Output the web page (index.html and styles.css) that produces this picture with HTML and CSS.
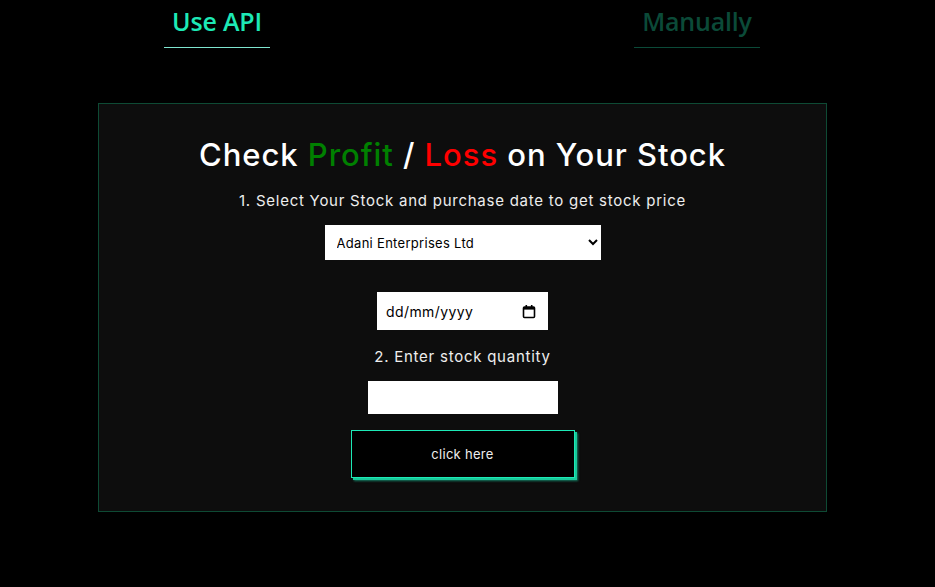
FILE: index.html
```html
<!DOCTYPE html>
<html lang="en">
<head>
<meta charset="utf-8">
<title>Profit / Loss</title>
<link rel="stylesheet" href="styles.css">
</head>
<body>
<nav class="tabs">
  <div class="tab-cell tab-cell-left"><a class="tab tab-active">Use API</a></div>
  <div class="tab-cell tab-cell-right"><a class="tab tab-inactive">Manually</a></div>
</nav>
<main class="card">
  <h1 class="title">Check <span class="profit">Profit</span> / <span class="loss">Loss</span> on Your Stock</h1>
  <p class="label">1. Select Your Stock and purchase date to get stock price</p>
  <select class="stock-select">
    <option>Adani Enterprises Ltd</option>
  </select>
  <label class="date-box">
    <input class="date-text" type="text" placeholder="dd/mm/yyyy">
    <svg class="cal-icon" width="14" height="15" viewBox="0 0 14 15" aria-hidden="true">
      <rect x="1.5" y="3" width="11" height="10.5" rx="1" fill="none" stroke="#000" stroke-width="1.6"/>
      <rect x="1.5" y="3" width="11" height="2.6" fill="#000"/>
      <rect x="3.5" y="1" width="1.6" height="2.5" fill="#000"/>
      <rect x="8.9" y="1" width="1.6" height="2.5" fill="#000"/>
    </svg>
  </label>
  <p class="label label-qty">2. Enter stock quantity</p>
  <input class="qty-input" type="number">
  <button class="btn">click here</button>
</main>
</body>
</html>
```
FILE: styles.css
```css
html, body {
  margin: 0;
  padding: 0;
  background: #000;
}
body {
  font-family: "Open Sans", "Noto Sans", sans-serif;
  color: #eee;
  min-height: 587px;
}
.tabs {
  display: flex;
  padding-top: 3px;
  width: 935px;
}
.tab-cell {
  display: flex;
  justify-content: center;
  flex-shrink: 0;
}
.tab-cell-left { width: 434px; }
.tab-cell-right { width: 396px; margin-left: 65px; }
.tab {
  font-family: "Open Sans", sans-serif;
  font-weight: 600;
  font-size: 25px;
  letter-spacing: -0.2px;
  line-height: 36px;
  display: block;
}
.tab-active {
  color: #1de9b6;
  border-bottom: 1px solid #7fe6d0;
  padding: 0 8px 8px;
}
.tab-inactive {
  color: #0b4a38;
  border-bottom: 1px solid #0b4a38;
  padding: 0 8px 8px;
}
.card {
  box-sizing: border-box;
  width: 729px;
  height: 409px;
  margin: 55px 0 0 98px;
  background: #0d0d0d;
  border: 1px solid #0e4a34;
  display: flex;
  flex-direction: column;
  align-items: center;
  padding-top: 32px;
}
.title {
  font-family: "Inter", "Roboto", sans-serif;
  font-weight: 500;
  font-size: 31px;
  line-height: 38px;
  margin: 0;
  color: #fff;
  letter-spacing: 0.95px;
}
.profit { color: #008000; }
.loss { color: #ff0000; }
.label {
  font-family: "Inter", "Roboto", sans-serif;
  font-size: 15px;
  line-height: 20px;
  margin: 17px 0 0;
  color: #eee;
  letter-spacing: 0.75px;
}
.stock-select {
  margin-top: 14px;
  width: 276px;
  height: 35px;
  border: none;
  border-radius: 0;
  background: #fff;
  font-family: "Inter", "Roboto", sans-serif;
  font-size: 13px;
  letter-spacing: 0.3px;
  color: #000;
  padding: 0 8px;
}
.date-box {
  margin-top: 32px;
  box-sizing: border-box;
  width: 171px;
  height: 38px;
  background: #fff;
  display: flex;
  align-items: center;
  padding: 0 12px 0 9px;
  gap: 4px;
}
.date-text {
  flex: 1;
  min-width: 0;
  border: none;
  outline: none;
  padding: 0;
  background: transparent;
  font-family: "Inter", "Roboto", sans-serif;
  font-size: 14px;
  letter-spacing: 0.4px;
  color: #000;
}
.date-text::placeholder {
  color: #000;
  opacity: 1;
}
.cal-icon { flex-shrink: 0; }
.label-qty {
  margin-top: 17px;
}
.qty-input {
  margin-top: 14px;
  box-sizing: border-box;
  width: 190px;
  height: 33px;
  border: none;
  border-radius: 0;
  background: #fff;
}
.btn {
  margin-top: 16px;
  box-sizing: border-box;
  width: 224px;
  height: 48px;
  background: #000;
  color: #eee;
  border: 1px solid #1de9b6;
  box-shadow: 2px 2px 0 #17c99a, 3px 3px 2px rgba(29,233,182,0.5);
  font-family: "Inter", "Roboto", sans-serif;
  font-size: 13px;
  letter-spacing: 0.3px;
}
```
